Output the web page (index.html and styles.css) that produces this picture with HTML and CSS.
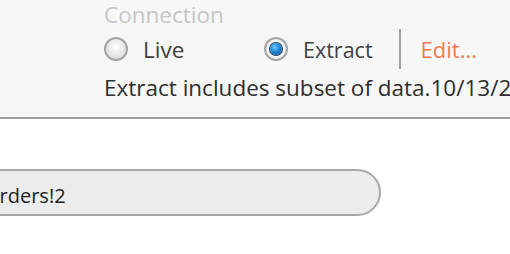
FILE: index.html
```html
<!DOCTYPE html>
<html>
<head>
<meta charset="utf-8">
<link rel="stylesheet" href="styles.css">
</head>
<body>
<div class="panel">
  <div class="title">Connection</div>
  <div class="row">
    <label class="opt opt-live"><span class="radio"></span><span>Live</span></label>
    <label class="opt"><span class="radio on"><span class="dot"></span></span><span class="lbl-extract">Extract</span></label>
    <span class="sep"></span>
    <span class="edit">Edit...</span>
  </div>
  <div class="info">Extract includes subset of data.10/13/2016 10:42:11 AM</div>
</div>
<div class="content">
  <div class="pill"><span class="pill-text">Orders!2</span></div>
</div>
</body>
</html>
```
FILE: styles.css
```css
html, body {
  margin: 0;
  padding: 0;
  background: #ffffff;
}
body {
  font-family: "Open Sans", "Noto Sans", sans-serif;
  font-size: 22.5px;
  color: #2b2b2b;
  width: 510px;
  height: 254px;
  overflow: hidden;
}
.panel {
  height: 120px;
  box-sizing: border-box;
  background: #f7f7f7;
  border-bottom: 2px solid #9e9e9e;
  padding-left: 104px;
  white-space: nowrap;
}
.title {
  color: #c6c6c6;
  line-height: 31px;
  margin-top: -1px;
}
.row {
  display: flex;
  align-items: center;
  height: 38px;
}
.opt {
  display: flex;
  align-items: center;
  gap: 15px;
  color: #404040;
}
.opt-live {
  width: 160px;
}
.lbl-extract {
  font-size: 21.5px;
}
.radio {
  width: 20px;
  height: 20px;
  border-radius: 50%;
  border: 2px solid #a5a5a5;
  background: radial-gradient(circle at 50% 40%, #ffffff 0%, #e6e6e6 55%, #d2d2d2 100%);
  box-sizing: content-box;
  display: flex;
  align-items: center;
  justify-content: center;
}
.radio.on {
  background: radial-gradient(circle, #ffffff 0%, #f0f0f0 60%, #d8d8d8 100%);
}
.dot {
  width: 12px;
  height: 12px;
  border-radius: 50%;
  background: radial-gradient(circle at 40% 35%, #6cc6ff 0%, #1e88d6 45%, #0b4f8a 100%);
  box-shadow: 0 0 0 1px #1a3c5a;
}
.sep {
  width: 2px;
  height: 40px;
  background: #a0a0a0;
  margin-left: 26px;
  margin-right: 20px;
}
.edit {
  color: #f37a4e;
  font-size: 22px;
}
.info {
  line-height: 31px;
  margin-top: 4px;
  color: #2e2e2e;
}
.content {
  padding-top: 50px;
}
.pill {
  margin-left: -40px;
  width: 421px;
  height: 47px;
  box-sizing: border-box;
  border: 2px solid #a8a8a8;
  border-radius: 0 24px 24px 0;
  background: #ececec;
  display: flex;
  align-items: center;
  padding-left: 22px;
  padding-top: 6px;
  color: #1e1e1e;
  font-size: 20px;
}
```
